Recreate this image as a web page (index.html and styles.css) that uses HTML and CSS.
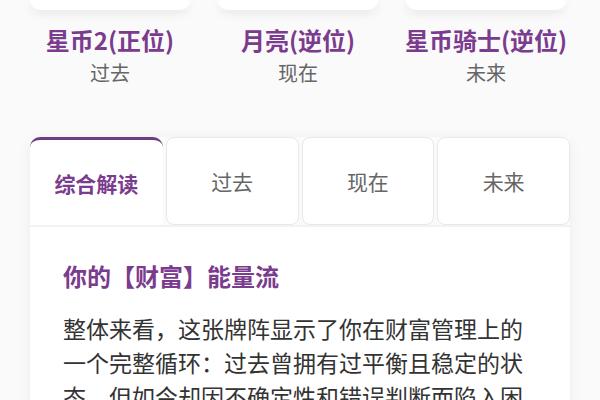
FILE: index.html
```html
<!DOCTYPE html>
<html lang="zh-CN">
<head>
  <meta charset="UTF-8">
  <meta name="viewport" content="width=device-width, initial-scale=1.0">
  <link rel="stylesheet" href="styles.css">
</head>
<body>
  <div class="spread">
    <div class="slot">
      <div class="card"></div>
      <div class="card-name">星币2(正位)</div>
      <div class="card-pos">过去</div>
    </div>
    <div class="slot">
      <div class="card"></div>
      <div class="card-name">月亮(逆位)</div>
      <div class="card-pos">现在</div>
    </div>
    <div class="slot">
      <div class="card"></div>
      <div class="card-name">星币骑士(逆位)</div>
      <div class="card-pos">未来</div>
    </div>
  </div>

  <div class="reading">
    <div class="tabs">
      <div class="tab active">综合解读</div>
      <div class="tab">过去</div>
      <div class="tab">现在</div>
      <div class="tab">未来</div>
    </div>
    <div class="tab-content">
      <h2 class="reading-title">你的【财富】能量流</h2>
      <p class="reading-text">整体来看，这张牌阵显示了你在财富管理上的一个完整循环：过去曾拥有过平衡且稳定的状态，但如今却因不确定性和错误判断而陷入困境，未来若不及时调整，可能会面临更加保守甚至停滞的局面。</p>
    </div>
  </div>
</body>
</html>
```

FILE: styles.css
```css
* {
  box-sizing: border-box;
}

body {
  margin: 0;
  padding: 0;
  background-color: #fafafa;
  font-family: "Noto Sans CJK SC", "Noto Sans", sans-serif;
  color: #333;
}

.spread {
  display: grid;
  grid-template-columns: repeat(3, 188px);
  padding-left: 16px;
}

.slot {
  display: flex;
  flex-direction: column;
  align-items: center;
}

.card {
  width: 160px;
  height: 10px;
  background-color: #fff;
  border-radius: 0 0 12px 12px;
  box-shadow: 0 4px 10px rgba(0, 0, 0, 0.07);
}

.card-name {
  margin-top: 14px;
  font-size: 24px;
  line-height: 32px;
  font-weight: 600;
  color: #7b3b8e;
  white-space: nowrap;
}

.card-pos {
  margin-top: 3px;
  font-size: 20px;
  line-height: 28px;
  color: #666;
}

.reading {
  margin: 50px 30px 0;
  background-color: #fff;
  border-radius: 10px 10px 0 0;
  box-shadow: 0 2px 14px rgba(0, 0, 0, 0.06);
}

.tabs {
  display: grid;
  grid-template-columns: repeat(4, 1fr);
  gap: 3px;
  background-color: #fafafa;
}

.tab {
  height: 88px;
  display: flex;
  align-items: center;
  justify-content: center;
  font-size: 21px;
  color: #666;
  background-color: #fff;
  border: 1px solid #e8e8e8;
  border-radius: 8px;
}

.tab.active {
  color: #7b3b8e;
  font-weight: 600;
  border: none;
  border-top: 3px solid #6e3c80;
  border-radius: 10px 10px 0 0;
}

.tab-content {
  border-top: 2px solid #f2f2f2;
  padding: 32px 33px;
}

.reading-title {
  margin: 0;
  font-size: 24px;
  line-height: 34px;
  font-weight: 600;
  color: #7b3b8e;
}

.reading-text {
  margin: 18px 0 0;
  font-size: 23px;
  line-height: 34px;
  color: #333;
}
```
